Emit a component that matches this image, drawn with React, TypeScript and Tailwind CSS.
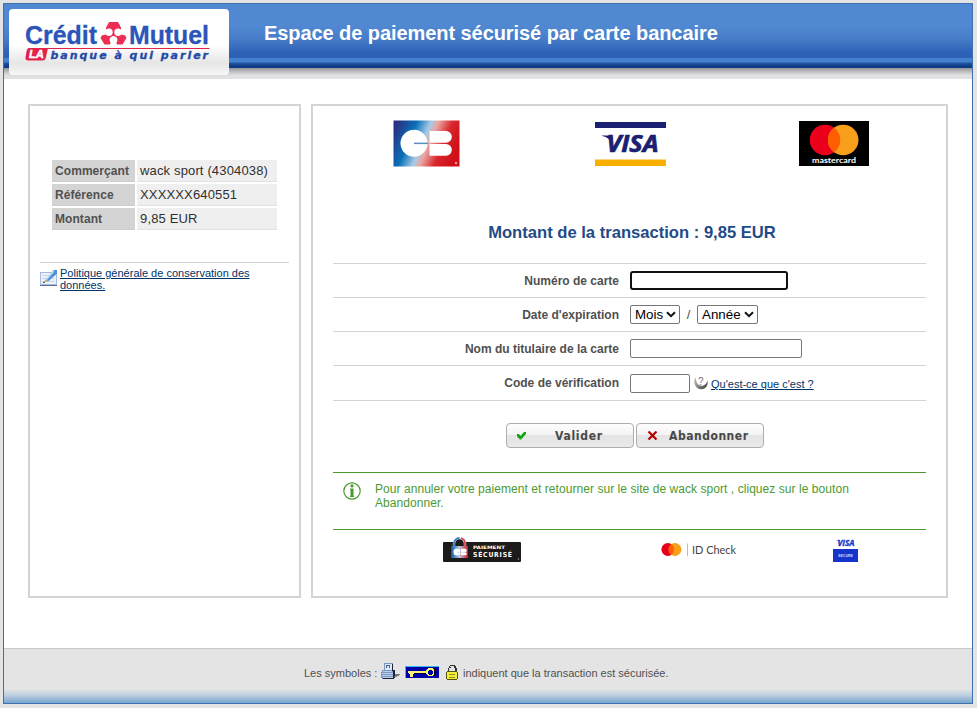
import type { ReactNode } from "react";

const ORDER_ROWS = [
  { label: "Commerçant", value: "wack sport (4304038)" },
  { label: "Référence", value: "XXXXXX640551" },
  { label: "Montant", value: "9,85 EUR" },
];

function BankLogo() {
  return (
    <svg width="188" height="42" viewBox="0 0 188 42" fontFamily="'Liberation Sans', Arial, sans-serif" fontWeight="bold">
      <text x="0" y="23" fontSize="26" fill="#2b55b8" stroke="#2b55b8" strokeWidth="0.300" textLength="72" lengthAdjust="spacingAndGlyphs">Crédit</text>
      <text x="104" y="23" fontSize="26" fill="#2b55b8" stroke="#2b55b8" strokeWidth="0.300" textLength="80" lengthAdjust="spacingAndGlyphs">Mutuel</text>
      <path d="M84 1h9l8.500 16-4 6.500h-18l-4-6.500z" fill="#ee2d55" />
      <g fill="#fff">
        <circle cx="84" cy="11.300" r="3.700" />
        <circle cx="93" cy="11.300" r="3.700" />
        <circle cx="88.500" cy="18.800" r="3.900" />
        <path d="M80.500 6l1.500 5-1 2.500-4.500 1zM96.500 6l-1.500 5 1 2.500 4.500 1zM86 21.500h5l1.500 2.500h-8z" />
      </g>
      <path d="M88.500 14l0-4M88.500 14l-3.500 2M88.500 14l3.500 2" stroke="#ee2d55" strokeWidth="0.900" />
      <rect x="22" y="27" width="162.500" height="1" fill="#e2244c" />
      <path d="M4 27h19l-2 9q-.6 3.500-3.500 3.500h-14q-3.500 0-3-3l1-6q.5-3.500 2.500-3.500z" fill="#e2244c" />
      <text x="4" y="37" fontSize="10" fill="#fff" stroke="#fff" strokeWidth="0.400" fontStyle="italic" textLength="15" lengthAdjust="spacingAndGlyphs">LA</text>
      <text x="25.500" y="37.500" fontSize="11" fill="#2348a5" stroke="#2348a5" strokeWidth="0.300" fontStyle="italic" fontFamily="'DejaVu Sans', sans-serif" textLength="157.500">banque à qui parler</text>
    </svg>
  );
}

function CbShape() {
  return (
    <>
      <circle cx="21" cy="23.300" r="13.500" fill="#fff" />
      <path d="M36.500 11H53a5.850 5.850 0 0 1 0 11.700H36.500zM36.500 24H53a5.850 5.850 0 0 1 0 11.700H36.500z" fill="#fff" />
      <rect x="21" y="22.600" width="14" height="1.500" fill="#5d8fbd" />
    </>
  );
}

function CbLogo() {
  return (
    <svg width="67" height="47" viewBox="0 0 67 47">
      <defs>
        <linearGradient id="cb" x1="0" y1="0.200" x2="1" y2="0.500">
          <stop offset="0" stopColor="#2b2f7f" />
          <stop offset="0.280" stopColor="#0870b8" />
          <stop offset="0.480" stopColor="#a9cbe6" />
          <stop offset="0.580" stopColor="#eaa5a0" />
          <stop offset="0.780" stopColor="#d9252c" />
          <stop offset="1" stopColor="#cf1019" />
        </linearGradient>
      </defs>
      <rect x="0.500" y="0.500" width="66" height="46" fill="url(#cb)" />
      <CbShape />
      <circle cx="63" cy="43" r="1.200" fill="#ee9698" />
    </svg>
  );
}

function VisaLogo() {
  return (
    <svg width="71" height="44" viewBox="0 0 71 44">
      <rect width="71" height="6" fill="#1b1f71" />
      <rect y="37.500" width="71" height="6.500" fill="#f9b000" />
      <path d="M7 13.500h9l1.500 3-1 4q-3-5.500-9.500-6.500z" fill="#1b1f71" />
      <text x="11.500" y="30" fontSize="23" fontWeight="bold" fontStyle="italic" fontFamily="'Open Sans', sans-serif" fill="#1b1f71" stroke="#1b1f71" strokeWidth="0.700" textLength="52" lengthAdjust="spacingAndGlyphs">VISA</text>
    </svg>
  );
}

function MastercardLogo() {
  return (
    <svg width="70" height="45" viewBox="0 0 70 45">
      <rect width="70" height="45" />
      <circle cx="26" cy="19" r="15.300" fill="#eb001b" />
      <circle cx="44.200" cy="19" r="15.300" fill="#f79e1b" />
      <path d="M35.100 6.700a15.300 15.300 0 0 1 0 24.600a15.300 15.300 0 0 1 0-24.600z" fill="#ff5f00" />
      <text x="13" y="41.500" fontSize="8" fontWeight="bold" fontFamily="Lato, sans-serif" fill="#fff" textLength="44" lengthAdjust="spacingAndGlyphs">mastercard</text>
    </svg>
  );
}

function NotepadIcon() {
  return (
    <svg width="17" height="17" viewBox="0 0 17 17" className="shrink-0">
      <rect x="0.500" y="3.500" width="16" height="12" fill="#eef2fb" stroke="#a9bce0" />
      <path d="M2 6.500h13M2 9.500h13M2 12.500h13" stroke="#cbd5ec" />
      <path d="M0 16.500h17" stroke="#5c6f96" />
      <path d="M13.500 1H17v3.500L8 12.500 6 11z" fill="#4b8ed8" />
      <path d="M14 2L6.500 10.500" stroke="#b7d9f7" strokeWidth="1.500" />
      <path d="M5.500 10.500L3 14l4-1.500z" fill="#c5b45a" />
      <path d="M4 12.500L2.500 14.500 5 13.500z" fill="#333" />
    </svg>
  );
}

function HelpIcon() {
  return (
    <svg width="14" height="14" viewBox="0 0 14 14">
      <defs>
        <linearGradient id="help" x1="0" y1="0" x2="1" y2="1">
          <stop offset="0.300" stopColor="#aaa" />
          <stop offset="1" stopColor="#333" />
        </linearGradient>
      </defs>
      <path d="M1.500 1.500Q-1 6 1.500 10 5 15 10.500 12.500 14.500 10 13.500 4.500 12 9 8 10 2.500 9.500 1.500 1.500z" fill="url(#help)" />
      <text x="4" y="9" fontSize="10" fontFamily="'Liberation Sans', sans-serif" fill="#777">?</text>
    </svg>
  );
}

function InfoIcon() {
  return (
    <svg width="18" height="18" viewBox="0 0 18 18">
      <circle cx="9" cy="9" r="8.200" fill="none" stroke="#4b9a2f" strokeWidth="1.200" />
      <circle cx="9" cy="3.900" r="1.600" fill="#4b9a2f" />
      <path d="M7 6.500h3.500v7.500h.5v1h-4v-1h.5v-6.500H7z" fill="#4b9a2f" />
    </svg>
  );
}

function CbSecureLogo() {
  return (
    <svg width="78" height="25" viewBox="0 0 78 25">
      <defs>
        <linearGradient id="cbs" x1="0" x2="1">
          <stop offset="0" stopColor="#0b5ba8" />
          <stop offset="0.500" stopColor="#b9c9e0" />
          <stop offset="1" stopColor="#d9151f" />
        </linearGradient>
      </defs>
      <rect y="5" width="78" height="20" rx="1" fill="#1c1b1a" />
      <path d="M11 9V6.500a5.500 5.500 0 0 1 11 0V9" fill="#1c1b1a" stroke="#eef3fa" strokeWidth="2.400" />
      <path d="M11 9V6.500a5.500 5.500 0 0 1 5.500-5.500" fill="none" stroke="#3f7dbd" strokeWidth="1.800" />
      <path d="M18 1.200a5.500 5.500 0 0 1 4 5.300V9" fill="none" stroke="#dc4650" strokeWidth="1.800" />
      <rect x="8" y="9" width="17" height="12" fill="url(#cbs)" />
      <g transform="translate(8.500 9) scale(.26)">
        <CbShape />
      </g>
      <g fontFamily="'DejaVu Sans', sans-serif" fontWeight="bold" fill="#fff">
        <text x="30" y="11.500" fontSize="4.500" textLength="32" lengthAdjust="spacingAndGlyphs">PAIEMENT</text>
        <text x="30" y="20" fontSize="6.800" textLength="39" fontFamily="'DejaVu Sans Condensed', 'DejaVu Sans', sans-serif">SÉCURISÉ</text>
      </g>
      <circle cx="75.500" cy="22" r="0.800" fill="#999" />
    </svg>
  );
}

function IdCheckLogo() {
  return (
    <svg width="76" height="14" viewBox="0 0 76 14">
      <circle cx="6.800" cy="6.500" r="6.400" fill="#eb001b" />
      <circle cx="14" cy="6.500" r="6.400" fill="#f79e1b" />
      <path d="M10.400 1.200a6.400 6.400 0 0 1 0 10.600a6.400 6.400 0 0 1 0-10.600z" fill="#ff5f00" />
      <path d="M26.500 0.500v12.500" stroke="#bbb" />
      <text x="31" y="10.500" fontSize="10.500" fontFamily="Lato, sans-serif" fill="#444" textLength="44" lengthAdjust="spacingAndGlyphs">ID Check</text>
    </svg>
  );
}

function VisaSecureLogo() {
  return (
    <svg width="25" height="23" viewBox="0 0 25 23" className="overflow-visible">
      <path d="M3.500 1h3l.8 1.800q-1.500-1.300-3.800-1.500z" fill="#1434cb" />
      <text x="4.500" y="7" fontSize="8" fontWeight="bold" fontStyle="italic" fontFamily="'Open Sans', sans-serif" fill="#1434cb" stroke="#1434cb" strokeWidth="0.300" textLength="17" lengthAdjust="spacingAndGlyphs">VISA</text>
      <rect y="10" width="25" height="13" fill="#1434cb" />
      <text x="5" y="18" fontSize="4" fontWeight="bold" fontFamily="'Liberation Sans', sans-serif" fill="#d5dcff" textLength="15" lengthAdjust="spacingAndGlyphs">SECURE</text>
    </svg>
  );
}

function FtpIcon() {
  return (
    <svg width="19" height="17" viewBox="0 0 19 17" shapeRendering="crispEdges">
      <path d="M3 0h9v7h1v8h-1v1H1v-1H0V9h1V7h2z" fill="#7d97bf" />
      <path d="M4 1h7v6H4z" fill="#dce9f5" />
      <path d="M5 2h1v3H5zM6 2h3v1H6zM8 3h1v2H8z" fill="#496184" />
      <path d="M2 8h9v1H2zM1 10h11v1H1zM1 12h11v1H1zM2 14h10v1H2z" fill="#b7d0eb" />
      <path d="M11 1h1v6h2v8h-1v1H2v-1h10V8h-1z" fill="#17233c" />
      <path d="M14 11h5v1h-1v1h-2v1h-3v-1h1z" fill="#777" />
    </svg>
  );
}

function KeyIcon() {
  return (
    <svg width="34" height="12" viewBox="0 0 34 12" shapeRendering="crispEdges">
      <rect width="34" height="12" fill="#0000a8" />
      <path d="M0 0h34v1H1v11H0z" fill="#35b9f5" />
      <path d="M4 6h18v2H8v3H6V8H4z" fill="#000040" />
      <path d="M3 5h19v2H9v1H8v3H5V8H4V7H3z" fill="#f8f078" />
      <path d="M23 2h5v1h1v1h1v4h-1v1h-1v1h-5V9h-1V8h-1V4h1V3h1z" fill="#f8f078" />
      <path d="M24 4h3v1h1v3h-1v1h-3V8h-1V5h1z" fill="#0000a8" />
      <path d="M29 2h1v2h1v4h-1v2h-1z" fill="#000" />
    </svg>
  );
}

function PadlockIcon() {
  return (
    <svg width="12" height="15" viewBox="0 0 12 15" shapeRendering="crispEdges">
      <path d="M4 0h5v1h1v2h1v4H9V3H8V2H5v1H4v4H2V3h1V1h1z" fill="#333" />
      <path d="M4 1h4v1H4zM3 3h1v4H3z" fill="#e0e0cc" />
      <path d="M1 6h10v1h1v7h-1v1H1v-1H0V7h1z" fill="#55530f" />
      <rect x="1" y="7" width="10" height="7" fill="#f4ed35" />
      <path d="M3 9h6v1H3zM3 12h6v1H3z" fill="#8f8c2a" />
    </svg>
  );
}

function FormRow({ label, children, className = "h-[34px]" }: { label: string; children: ReactNode; className?: string }) {
  return (
    <div className={`flex items-center border-b border-[#d4d4d4] ${className}`}>
      <label className="w-[286px] text-right text-[12px] font-bold text-[#505050]">{label}</label>
      <div className="ml-[11px] flex items-center">{children}</div>
    </div>
  );
}

function SelectBox({ label, className }: { label: string; className: string }) {
  return (
    <button type="button" className={`flex h-[19px] items-center justify-between rounded-[2px] border border-[#767676] bg-white pr-[3px] pl-[4px] text-[13.33px] leading-none text-black ${className}`}>
      {label}
      <svg width="10" height="7" viewBox="0 0 10 7">
        <path d="M1 1.200l4 4 4-4" fill="none" stroke="#111" strokeWidth="2" />
      </svg>
    </button>
  );
}

function ActionButton({ label, labelWidth, icon, textClass }: { label: string; labelWidth: number; icon: ReactNode; textClass: string }) {
  return (
    <button type="button" className="flex h-[25px] w-[128px] items-center rounded-[4px] border border-[#aeaeae] bg-[linear-gradient(#fdfdfd_0%,#f3f3f3_49%,#e4e4e4_50%,#e9e9e9_100%)] pl-[10px]">
      {icon}
      <svg width="84" height="16" className={textClass}>
        <text x="0" y="12" fontSize="12" fontWeight="bold" fontFamily="'DejaVu Sans Condensed', 'DejaVu Sans', sans-serif" fill="#484848" textLength={labelWidth}>{label}</text>
      </svg>
    </button>
  );
}

export default function App() {
  return (
    <div className="h-[708px] w-[977px] bg-[#e4e4e4] pt-[3px] pl-[3px] font-['Liberation_Sans',Arial,sans-serif]">
      <div className="flex h-[701px] w-[970px] flex-col border border-[#3d70ae] bg-white">
        <header className="flex h-[75px] shrink-0 bg-[linear-gradient(#5089d2_0px,#5089d2_22px,#477cc8_35px,#2d60b7_49px,#2d60b7_54px,#4580ce_54px,#4580ce_58px,#2456a3_59px,#103c86_62px,#103c86_64px,#949499_64px,#c2c2c6_68px,#dfdfe2_71px,#e2e2e5_75px)]">
          <div className="mt-[5px] ml-[5px] h-[66px] w-[220px] rounded-[4px] bg-[linear-gradient(#fff_0px,#fff_36px,#e6e6e6_54px,#f7f7f7_66px)] pt-[12px] pl-[16px]">
            <BankLogo />
          </div>
          <h1 className="mt-[17px] ml-[35px] text-[20px] leading-6 font-bold tracking-[-0.07px] text-white">Espace de paiement sécurisé par carte bancaire</h1>
        </header>

        <main className="flex h-[569px] gap-[10px] pt-[25px] pl-[24px]">
          <aside className="h-[494px] w-[273px] border-2 border-[#d4d4d4] px-[10px] pt-[54px]">
            <dl className="ml-[12px] flex w-[225px] flex-col gap-[2px]">
              {ORDER_ROWS.map((row) => (
                <div key={row.label} className="flex h-[22px] gap-[2px]">
                  <dt className="w-[83px] border-b border-[#cecece] bg-[#d4d4d4] pl-[3px] text-[12px] leading-[22px] font-bold tracking-[0.07px] text-[#505050]">{row.label}</dt>
                  <dd className="w-[140px] border-b border-[#e2e2e2] bg-[#efefef] pl-[3px] text-[13px] leading-[22px] tracking-[0.15px] text-[#303030]">{row.value}</dd>
                </div>
              ))}
            </dl>
            <div className="mt-[32px] flex gap-[3px] border-t border-[#d4d4d4] pt-[4px]">
              <div className="pt-[2px]">
                <NotepadIcon />
              </div>
              <a href="#" className="w-[200px] text-[11px] leading-3 text-[#003366] underline">
                Politique générale de conservation des données.
              </a>
            </div>
          </aside>

          <section className="h-[494px] w-[637px] border-2 border-[#d4d4d4] px-[20px]">
            <div className="flex items-start pt-[14px] pl-[60px]">
              <CbLogo />
              <div className="mt-[2px] ml-[135px]">
                <VisaLogo />
              </div>
              <div className="mt-px ml-[133px]">
                <MastercardLogo />
              </div>
            </div>
            <h2 className="mt-[56px] pl-[5px] text-center text-[16.6px] leading-5 font-bold text-[#1f4b87]">Montant de la transaction : 9,85 EUR</h2>

            <div className="mt-[20px] border-t border-[#d4d4d4]">
              <FormRow label="Numéro de carte">
                <input autoFocus className="h-[19px] w-[158px] rounded-[3px] border-2 border-[#101010] bg-white px-1 text-[13px] outline-none" />
              </FormRow>
              <FormRow label="Date d'expiration">
                <SelectBox label="Mois" className="w-[50px]" />
                <span className="w-[17px] text-center text-[13px] text-[#505050]">/</span>
                <SelectBox label="Année" className="w-[61px]" />
              </FormRow>
              <FormRow label="Nom du titulaire de la carte">
                <input className="h-[19px] w-[172px] rounded-[2px] border border-[#767676] bg-white px-1 text-[13px]" />
              </FormRow>
              <FormRow label="Code de vérification" className="h-[35px]">
                <input className="mt-px h-[19px] w-[60px] rounded-[2px] border border-[#767676] bg-white px-1 text-[13px]" />
                <span className="ml-1">
                  <HelpIcon />
                </span>
                <a href="#" className="mt-[3px] ml-[3px] text-[11px] leading-none text-[#003366] underline">Qu'est-ce que c'est ?</a>
              </FormRow>
            </div>

            <div className="mt-[22px] flex gap-[2px] pl-[173px]">
              <ActionButton
                label="Valider"
                labelWidth={47}
                textClass="ml-[29px]"
                icon={
                  <svg width="9" height="9" viewBox="0 0 9 9" className="shrink-0">
                    <path d="M0 3h2l1.500 2L7 1h2v2L4 8.500H3L0 5.500z" fill="#12a512" />
                  </svg>
                }
              />
              <ActionButton
                label="Abandonner"
                labelWidth={79}
                textClass="ml-[11px]"
                icon={
                  <svg width="11" height="9" viewBox="0 0 11 9" className="shrink-0">
                    <path d="M1.500 0.500l8 8M9.500 0.500l-8 8" stroke="#b40000" strokeWidth="2.200" />
                  </svg>
                }
              />
            </div>

            <div className="mt-[24px] flex h-[58px] border-y border-[#4b9a2f] pt-[9px] pl-[10px]">
              <InfoIcon />
              <p className="ml-[14px] w-[500px] text-[12px] leading-[14px] tracking-[0.055px] text-[#4b9a2f]">
                Pour annuler votre paiement et retourner sur le site de wack sport , cliquez sur le bouton Abandonner.
              </p>
            </div>

            <div className="flex items-start pt-[7px] pl-[110px]">
              <CbSecureLogo />
              <div className="mt-[6px] ml-[140px]">
                <IdCheckLogo />
              </div>
              <div className="mt-[2px] ml-[96px]">
                <VisaSecureLogo />
              </div>
            </div>
          </section>
        </main>

        <footer className="flex h-[55px] items-start border-t border-[#c8c8c8] bg-[linear-gradient(#e4e4e4_0px,#e4e4e4_40px,#bfd0df_46px,#76a5cf_54px)] pt-[14px] pl-[300px] text-[11px] leading-[20px] text-[#505050]">
          <span className="w-[77px]">Les symboles :</span>
          <FtpIcon />
          <span className="mt-[3px] ml-[5px]">
            <KeyIcon />
          </span>
          <span className="mt-[2px] ml-[7px]">
            <PadlockIcon />
          </span>
          <span className="ml-[5px]">indiquent que la transaction est sécurisée.</span>
        </footer>
      </div>
    </div>
  );
}
